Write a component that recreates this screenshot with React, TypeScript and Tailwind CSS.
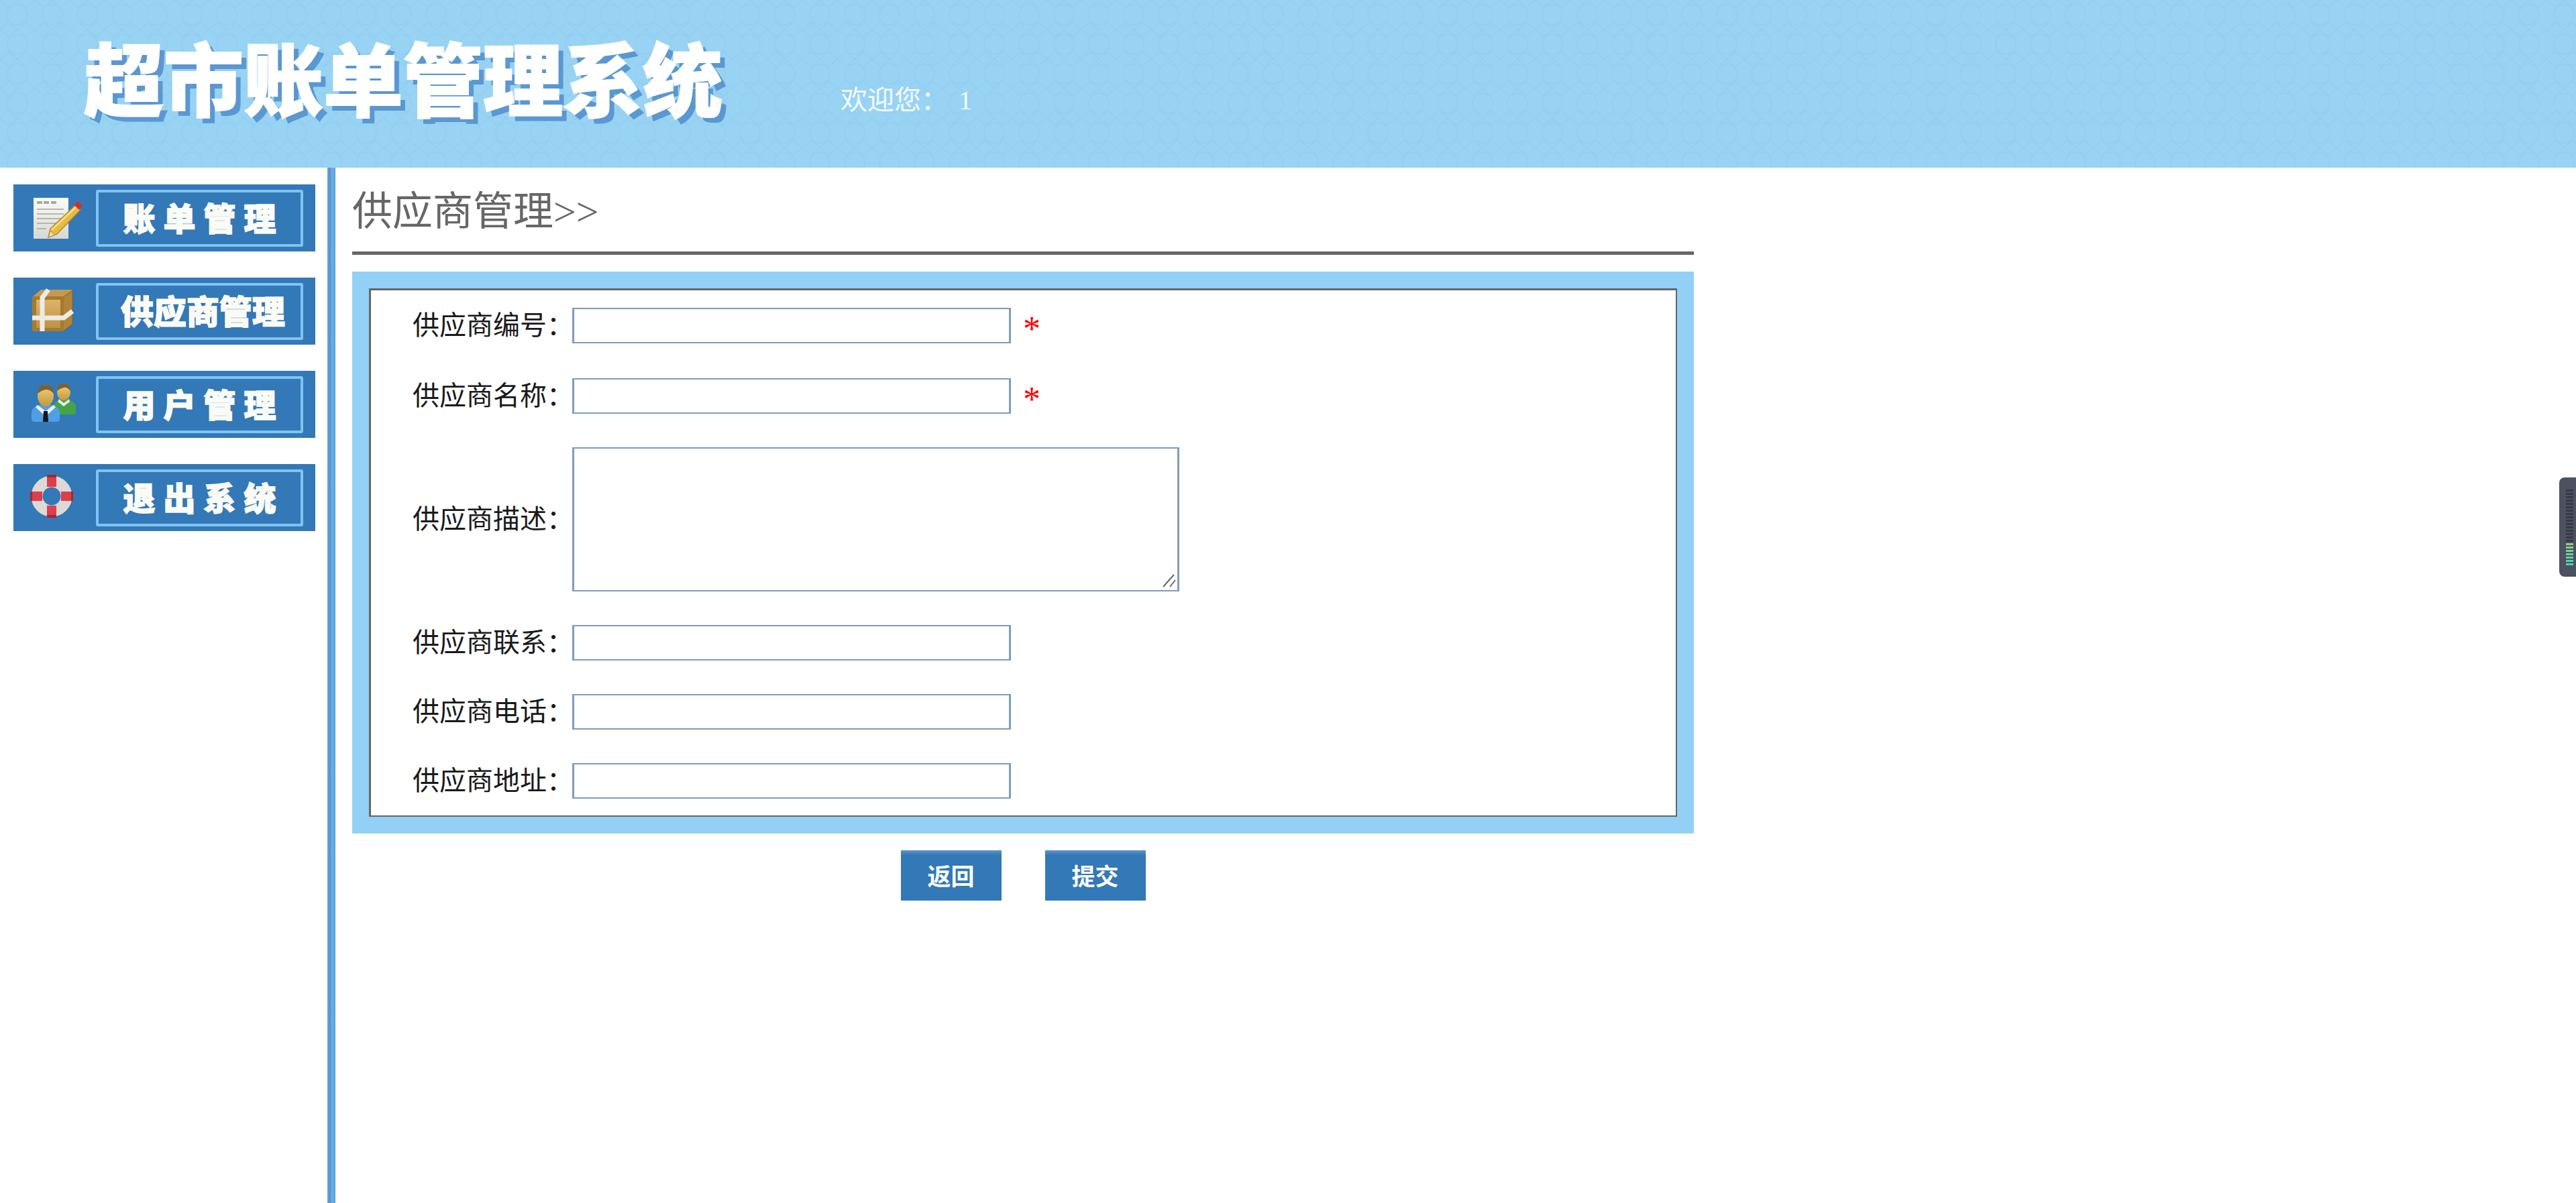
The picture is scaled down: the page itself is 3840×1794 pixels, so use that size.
const serif = "font-['Liberation_Serif','Noto_Sans_CJK_SC',serif]";

const NoteIcon = () => (
  <svg width="80" height="80" viewBox="0 0 80 80" className="shrink-0 ml-[24px]">
    <defs>
      <linearGradient id="paper" x1="0" y1="0" x2="0" y2="1">
        <stop offset="0" stopColor="#fbfbf8" />
        <stop offset="1" stopColor="#d8d8d2" />
      </linearGradient>
    </defs>
    <rect x="6" y="10" width="52" height="61" fill="url(#paper)" />
    <path d="M11 15h8v4h-8zM21 15h8v4h-8zM32 15h8v4h-8z" fill="#a9a9a4" />
    <path d="M11 27h40M11 34h40M11 41h40M11 48h28M11 56h14" stroke="#a5a5a0" strokeWidth="1.6" />
    <path d="M28 69 31 56 68 21 76 28 41 64Z" fill="#eab93f" stroke="#a98325" strokeWidth="1.2" />
    <path d="M33 58 69 24" stroke="#f9df8a" strokeWidth="2.5" />
    <path d="M28 69 31 59 38 65Z" fill="#f2dcae" stroke="#a98325" strokeWidth="1" />
    <path d="M66 20 72 15 79 22 74 28Z" fill="#c9343a" />
  </svg>
);

const BoxIcon = () => (
  <svg width="80" height="80" viewBox="0 0 80 80" className="shrink-0 ml-[24px]">
    <defs>
      <linearGradient id="boxFace" x1="0" y1="0" x2="0" y2="1">
        <stop offset="0" stopColor="#dcb468" />
        <stop offset="1" stopColor="#bf9244" />
      </linearGradient>
    </defs>
    <path d="M4 19 17 8h47v13L50 19Z" fill="#c39a4c" />
    <path d="M50 19 64 9v50L50 70Z" fill="#b0843a" stroke="#86621f" strokeWidth="1" />
    <rect x="4" y="18" width="47" height="52" rx="2" fill="#a67a2e" />
    <rect x="10" y="23" width="36" height="42" fill="url(#boxFace)" />
    <path d="M19 70V20L28 8" fill="none" stroke="#ecebe6" strokeWidth="7" />
    <path d="M4 50h47l13-10" fill="none" stroke="#ecebe6" strokeWidth="7" />
  </svg>
);

const UsersIcon = () => (
  <svg width="80" height="80" viewBox="0 0 80 80" className="shrink-0 ml-[24px]">
    <defs>
      <linearGradient id="skin" x1="0" y1="0" x2="0" y2="1">
        <stop offset="0" stopColor="#f0cf7c" />
        <stop offset="1" stopColor="#c49a3c" />
      </linearGradient>
    </defs>
    <path d="M36 53V43q0-9 15-10 17 0 18 10v9q0 3-4 3H40q-4 0-4-2Z" fill="#45a545" />
    <path d="M44 32l7 6 8-6 1 4-9 7-9-7Z" fill="#e6f2df" />
    <ellipse cx="51" cy="22" rx="10" ry="12" fill="url(#skin)" />
    <path d="M41 20q1-11 10-11t10 11q-5-6-10-5t-10 5Z" fill="#80602a" />
    <path d="M3 62V52q1-11 21-13 20 2 21 13v10q0 4-5 4H8q-5 0-5-4Z" fill="#4f9fe6" />
    <path d="M12 41l12 9 12-9 3 3-15 14-15-14Z" fill="#eef5fb" />
    <path d="M21 50h6l1 16h-8Z" fill="#16181c" />
    <ellipse cx="24" cy="27" rx="12" ry="16" fill="url(#skin)" />
    <path d="M12 24q1-13 12-13t12 13q-6-7-12-6t-12 6Z" fill="#80602a" />
  </svg>
);

const BuoyIcon = () => (
  <svg width="80" height="80" viewBox="0 0 80 80" className="shrink-0 ml-[24px]">
    <circle cx="33" cy="38" r="22" fill="none" stroke="#dcd9d6" strokeWidth="17" />
    <path d="M26 6h14v18H26zM26 52h14v18H26zM1 31h18v14H1zM47 31h18v14H47z" fill="#dc3f4b" />
    <path d="M26 6h14v4H26zM26 66h14v4H26zM1 31h3v14H1zM62 31h3v14h-3z" fill="#a92630" />
  </svg>
);

const menus = [
  { label: "账单管理", icon: <NoteIcon />, text: "tracking-[12px] pl-[12px] text-[48px]" },
  { label: "供应商管理", icon: <BoxIcon />, text: "pl-[10px] text-[49px]" },
  { label: "用户管理", icon: <UsersIcon />, text: "tracking-[12px] pl-[12px] text-[48px]" },
  { label: "退出系统", icon: <BuoyIcon />, text: "tracking-[12px] pl-[12px] text-[48px]" },
];

const fields = [
  { label: "供应商编号：", required: true, gap: "mt-[26px]" },
  { label: "供应商名称：", required: true, gap: "mt-[52px]" },
  { label: "供应商描述：", area: true, gap: "mt-[50px]" },
  { label: "供应商联系：", gap: "mt-[50px]" },
  { label: "供应商电话：", gap: "mt-[50px]" },
  { label: "供应商地址：", gap: "mt-[50px]" },
];

const volumeBars = ["bg-[#8fd27c]", "bg-[#84d284]", "bg-[#78d28e]", "bg-[#6cd298]", "bg-[#60d2a2]", "bg-[#56d2ac]", "bg-[#4fd2b4]"];

const HeaderTexture = () => (
  <svg className="absolute inset-0 h-full w-full" aria-hidden="true">
    <defs>
      <pattern id="tile" width="52" height="44" patternUnits="userSpaceOnUse">
        <circle cx="26" cy="22" r="15" fill="none" stroke="#92cff1" strokeWidth="2" />
        <path d="M0 0 13 11 26 0 39 11 52 0M0 44 13 33 26 44 39 33 52 44" fill="none" stroke="#93cff1" strokeWidth="2" />
      </pattern>
    </defs>
    <rect width="100%" height="100%" fill="url(#tile)" />
  </svg>
);

export default function App() {
  return (
    <div className={`relative h-[1794px] overflow-hidden bg-white ${serif}`}>
      {/* HEADER */}
      <header className="relative flex h-[250px] items-start overflow-hidden bg-[#99d3f4]">
        <HeaderTexture />
        <h1 className="relative w-[1253px] pl-[125px] pt-[54px] font-['Noto_Sans_CJK_SC',sans-serif] text-[119px] font-black leading-none whitespace-nowrap text-white [-webkit-text-stroke:2px_#ffffff] [text-shadow:8px_8px_0_#5b97d0]">
          超市账单管理系统
        </h1>
        <span className="relative pt-[126px] text-[40px] leading-[48px] whitespace-pre text-[#f4fbff] [word-spacing:6px]">欢迎您： 1</span>
      </header>

      <div className="flex h-[1544px]">
        {/* SIDEBAR */}
        <nav className="flex w-[488px] shrink-0 flex-col gap-[39px] pl-[20px] pt-[25px]">
          {menus.map((m) => (
            <div key={m.label} className="flex h-[100px] w-[450px] items-center bg-[#3378b7]">
              <div className="flex w-[123px] shrink-0 items-center">{m.icon}</div>
              <div className="flex h-[85px] w-[309px] items-center justify-center rounded-[3px] border-[4px] border-[#7fc4f2]">
                <span className={`-mt-[5px] font-['Noto_Sans_CJK_SC',sans-serif] leading-none font-black whitespace-nowrap text-[#fbfbf6] [-webkit-text-stroke:1.5px_#fbfbf6] ${m.text}`}>
                  {m.label}
                </span>
              </div>
            </div>
          ))}
        </nav>
        <div className="w-[12px] shrink-0 bg-[linear-gradient(to_right,#6aa8e0,#5492cc_30%,#6fb0e8_60%,#5a9ad6)]" />

        {/* CONTENT */}
        <main className="flex-1 pl-[25px]">
          <div className="w-[2000px]">
            <h2 className="h-[130px] border-b-[5px] border-[#666666] pt-[36px] text-[60px] leading-[60px] font-normal text-[#666666]">供应商管理&gt;&gt;</h2>
            <div className="mt-[25px] bg-[#92d0f5] p-[25px]">
              <div className="border-[#666666] border-t-[3px] border-l-[3px] border-r-2 border-b-2 bg-white pb-[25px] pl-[62px]">
                {fields.map((f) => (
                  <div key={f.label} className={`flex h-[53px] items-center ${f.area ? "h-[215px]" : ""} ${f.gap}`}>
                    <label className="w-[238px] shrink-0 text-[40px] leading-[48px] whitespace-nowrap text-[#1a1a1a]">{f.label}</label>
                    {f.area ? (
                      <div className="relative h-[215px] w-[905px]">
                        <textarea className="block h-full w-full resize-none border-x-[3px] border-y-2 border-[#7f9db9] bg-white outline-none" />
                        <svg className="absolute bottom-[6px] right-[5px]" width="20" height="20" viewBox="0 0 20 20" aria-hidden="true">
                          <path d="M1 19 17 1M11 19 19 9" stroke="#666666" strokeWidth="2" />
                        </svg>
                      </div>
                    ) : (
                      <input className="block h-[53px] w-[654px] border-x-[3px] border-y-2 border-[#7f9db9] bg-white outline-none" />
                    )}
                    {f.required && <span className="ml-[18px] mt-[10px] h-[43px] text-[52px] leading-[43px] text-[#ff0000]">*</span>}
                  </div>
                ))}
              </div>
            </div>
            <div className="mt-[25px] flex justify-center gap-[65px]">
              {["返回", "提交"].map((b) => (
                <button key={b} className="h-[75px] w-[150px] bg-[linear-gradient(to_bottom,#6097ca,#3378b7_7px)] font-['Noto_Sans_CJK_SC',sans-serif] text-[35px] font-bold text-white">
                  {b}
                </button>
              ))}
            </div>
          </div>
        </main>
      </div>

      {/* floating volume widget on the right edge */}
      <div className="absolute right-0 top-[712px] flex h-[148px] w-[25px] flex-col items-end gap-[2px] rounded-l-[8px] bg-[#4c5261] pr-[4px] pt-[18px]">
        {Array.from({ length: 16 }).map((_, i) => (
          <div key={i} className="h-[3px] w-[11px] bg-[#363a47]" />
        ))}
        {volumeBars.map((c) => (
          <div key={c} className={`h-[3px] w-[11px] ${c}`} />
        ))}
      </div>
    </div>
  );
}
